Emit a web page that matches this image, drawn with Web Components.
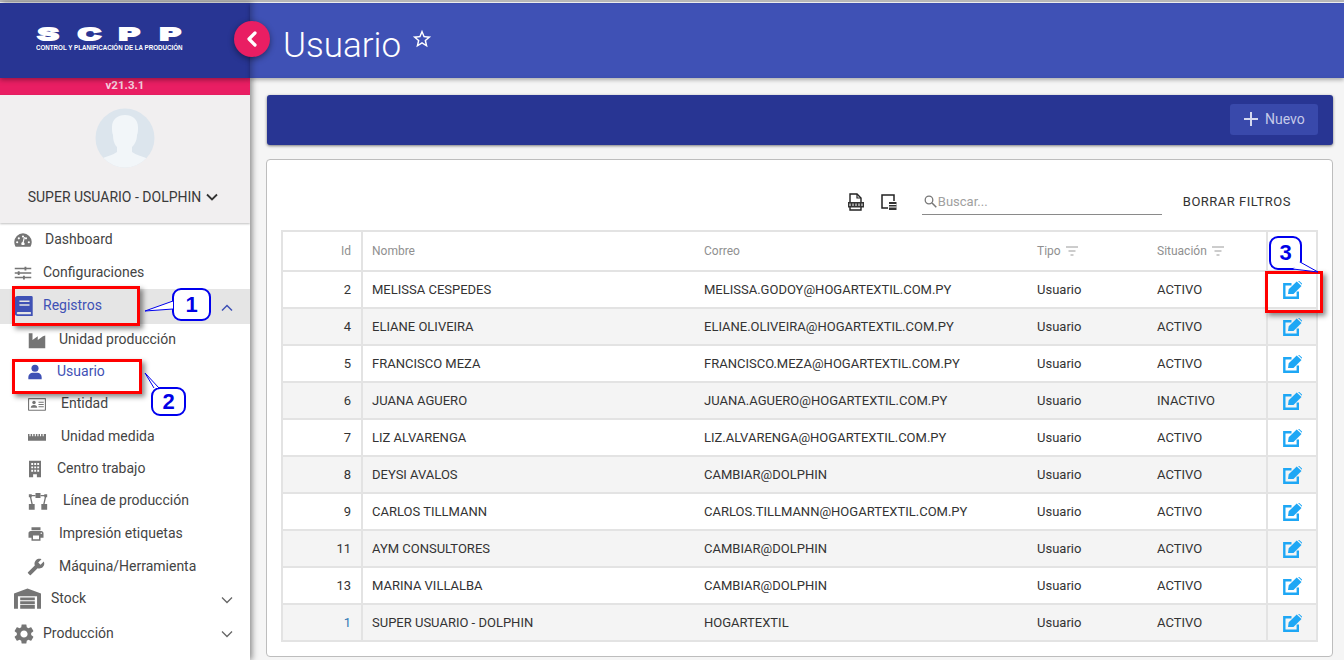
<!DOCTYPE html>
<html lang="es"><head><meta charset="utf-8"><title>Usuario</title>
<style>
html,body{margin:0;padding:0;height:660px;overflow:hidden;background:#f5f5f5;font-family:Roboto,"Liberation Sans",sans-serif}
</style></head><body>
<scpp-app>
  <scpp-sidebar slot="side"></scpp-sidebar>
  <scpp-header slot="head" title-text="Usuario"></scpp-header>
  <scpp-toolbar slot="main"></scpp-toolbar>
  <scpp-table-card slot="main"></scpp-table-card>
</scpp-app>
<scpp-mark box="12,286,128,40"></scpp-mark>
<scpp-mark box="12,359,130,35"></scpp-mark>
<scpp-mark box="1265,271,58,42"></scpp-mark>
<scpp-callout box="172,288,39,33" tail="M1 13L-27 23L1 21" n="1"></scpp-callout>
<scpp-callout box="151,387,35,29" tail="M8 1L-6 -14L3 1" n="2"></scpp-callout>
<scpp-callout box="1269,236,33,34" tail="M24 33L49 36L31 26" n="3"></scpp-callout>
<script>
const ICONS={
 dash:'<path d="M12 4A10.500 10.500 0 0 0 1.500 14.500c0 2 .5 3.700 1.400 5.200.2.300.5.300.8.300h16.600c.3 0 .6 0 .8-.3.9-1.500 1.400-3.200 1.400-5.200A10.500 10.500 0 0 0 12 4zm0 2.500a1.300 1.300 0 1 1 0 2.600 1.300 1.300 0 0 1 0-2.600zM5 16a1.300 1.300 0 1 1 0-2.600A1.300 1.300 0 0 1 5 16zm2-4.700a1.300 1.300 0 1 1 0-2.600 1.300 1.300 0 0 1 0 2.600zm6.600 6.700h-3.200c-.3-.5-.4-1-.4-1.500 0-1 .7-1.800 1.500-2l1.400-5.500c.1-.4.500-.6.900-.5.400.1.600.5.500.9l-1.400 5.200c.7.400 1.100 1.100 1.100 1.900 0 .5-.1 1-.4 1.500zm2-6.700a1.300 1.300 0 1 1 0-2.600 1.300 1.300 0 0 1 0 2.600zM19 16a1.300 1.300 0 1 1 0-2.600 1.300 1.300 0 0 1 0 2.600z"/>',
 tune:'<path d="M1 5h13V3.500h2.500V5H23v2h-6.500v1.500H14V7H1zM1 11h4V9.500h2.500V11H23v2H7.500v1.500H5V13H1zM1 17h11v-1.500h2.500V17H23v2h-8.500v1.500H12V19H1z"/>',
 book:'<path d="M5 1h15a1.500 1.500 0 0 1 1.500 1.500V23H5a3 3 0 0 1-3-3V4a3 3 0 0 1 3-3zm2 5v1.700h11V6zm0 4v1.700h11V10zM5 18.500a1.300 1.300 0 0 0 0 2.500h14.500v-2.500z"/>',
 factory:'<path d="M1 3h5v9l7-5v5l7-5 3-1v17H1z"/>',
 user:'<circle cx="12" cy="6.500" r="5.300"/><path d="M2 23v-3.500C2 15.500 5.500 13 8 13h8c2.500 0 6 2.500 6 6.500V23z"/>',
 card:'<path fill-rule="evenodd" d="M1 4h22a1 1 0 0 1 1 1v15a1 1 0 0 1-1 1H1a1 1 0 0 1-1-1V5a1 1 0 0 1 1-1zm.5 1.500v14h21v-14z"/><circle cx="8" cy="10" r="2.300"/><path d="M3.700 17c0-2.500 1.800-3.700 4.300-3.700s4.300 1.200 4.300 3.700zM14 9h7v1.400h-7zM14 12h7v1.400h-7zM14 15h7v1.400h-7z"/>',
 ruler:'<path d="M0 8h2v3h1.500V8h2v3H7V8h2v3h1.500V8h2v3H14V8h2v3h1.500V8h2v3H21V8h3v9H0z"/>',
 building:'<path fill-rule="evenodd" d="M4 1h16v22h-5.500v-4h-5v4H4zm3 3v2.500h2.500V4zm4 0v2.500h2.500V4zm4 0v2.500h2.500V4zM7 8.500V11h2.500V8.500zm4 0V11h2.500V8.500zm4 0V11h2.500V8.500zM7 13v2.500h2.500V13zm4 0v2.500h2.500V13zm4 0v2.500h2.500V13z"/>',
 tree:'<path d="M9 2.500h6v6H9zM1 4h3.500v3.500H1zM19.500 4H23v3.500h-3.500zM1 15.500h7v7H1zM16 15.500h7v7h-7z"/><path d="M3 7l2 9M21 7l-2 9M3 5.500h6M15 5.500h6" stroke="#757575" stroke-width="1.600" fill="none"/>',
 print:'<path d="M19 8H5c-1.660 0-3 1.340-3 3v6h4v4h12v-4h4v-6c0-1.660-1.340-3-3-3zm-3 11H8v-5h8v5zm3-7c-.55 0-1-.45-1-1s.45-1 1-1 1 .45 1 1-.45 1-1 1zm-1-9H6v4h12V3z"/>',
 wrench:'<path transform="matrix(-1 0 0 1 24 0)" d="M22.700 19l-9.100-9.100c.9-2.300.4-5-1.500-6.900-2-2-5-2.400-7.400-1.300L9 6 6 9 1.600 4.700C.4 7.100.9 10.100 2.900 12.100c1.900 1.900 4.600 2.400 6.900 1.500l9.100 9.100c.4.400 1 .4 1.400 0l2.300-2.300c.5-.4.500-1.100.1-1.400z"/>',
 store:'<path fill-rule="evenodd" d="M12 3L24 7.500V21h-3.500V10h-17v11H0V7.500zM5.500 11h13v2.600h-13zm0 3.400h13V17h-13zm0 3.400h13V21h-13z"/>',
 gear:'<path d="M19.140 12.940c.04-.3.06-.61.06-.94 0-.32-.02-.64-.07-.94l2.030-1.580c.18-.14.23-.41.12-.61l-1.920-3.320c-.12-.22-.37-.29-.59-.22l-2.390.96c-.5-.38-1.030-.7-1.620-.94l-.36-2.540c-.04-.24-.24-.41-.48-.41h-3.840c-.24 0-.43.17-.47.41l-.36 2.540c-.59.24-1.130.57-1.620.94l-2.390-.96c-.22-.08-.47 0-.59.22L2.740 8.870c-.12.21-.08.47.12.61l2.030 1.580c-.05.3-.09.63-.09.94s.02.64.07.94l-2.030 1.580c-.18.14-.23.41-.12.61l1.920 3.320c.12.22.37.29.59.22l2.390-.96c.5.38 1.030.7 1.620.94l.36 2.540c.05.24.24.41.48.41h3.840c.24 0 .44-.17.47-.41l.36-2.540c.59-.24 1.130-.56 1.620-.94l2.390.96c.22.08.47 0 .59-.22l1.920-3.320c.12-.22.07-.47-.12-.61l-2.010-1.580zM12 15.600c-1.980 0-3.600-1.620-3.600-3.600s1.620-3.600 3.600-3.600 3.600 1.620 3.600 3.600-1.620 3.600-3.600 3.600z"/>'
};
const svg=(name,size,color)=>`<svg width="${size}" height="${size}" viewBox="0 0 24 24" fill="${color}" aria-hidden="true">${ICONS[name]}</svg>`;
const def=(tag,html,extra)=>{customElements.define(tag,class extends HTMLElement{
  connectedCallback(){ if(this.shadowRoot) return; const r=this.attachShadow({mode:'open'}); r.innerHTML=typeof html==='function'?html(this):html; if(extra) extra(this,r);}
});};

def('scpp-app',`<style>
:host{display:grid;grid-template-columns:250px minmax(0,1fr);grid-template-rows:75px 1fr;width:1344px;height:660px;box-sizing:border-box;padding-top:3px;overflow:hidden;position:relative;background:#f5f5f5}
:host::before{content:"";position:absolute;left:0;right:0;top:0;height:2px;background:#b9b9b9}
.side{grid-row:1/3;grid-column:1;position:relative;z-index:2;min-height:0}
.head{grid-row:1;grid-column:2;position:relative;z-index:3}
.main{grid-row:2;grid-column:2;padding:17px 11px 0 16px;display:flex;flex-direction:column;gap:14px;min-height:0;min-width:0}
</style><div class="side"><slot name="side"></slot></div><div class="head"><slot name="head"></slot></div><div class="main"><slot name="main"></slot></div>`);

def('scpp-sidebar',`<style>
:host{display:flex;flex-direction:column;height:657px;background:#fff;box-shadow:2px 0 6px rgba(0,0,0,.45);overflow:hidden;font-family:Roboto,"Liberation Sans",sans-serif}
.brand{height:75px;background:#283593;box-shadow:0 2px 5px rgba(0,0,0,.35);position:relative;z-index:2;flex:none;display:flex;flex-direction:column;padding:24px 0 0 36px;box-sizing:border-box;color:#fff}
.letters{display:flex;gap:16px;height:15px;align-items:center}
.letters span{display:block;width:24.500px;font:700 16.500px/15px "Liberation Sans",sans-serif;-webkit-text-stroke:2.200px #fff;transform:scaleX(1.85);text-align:center}
.sub{font:700 8px/8px "Liberation Sans",sans-serif;white-space:nowrap;transform:scaleX(.777);transform-origin:0 0;margin-top:2px}
.ver{height:17px;background:#e91e63;color:#f6cfdd;font-size:11.500px;font-weight:700;line-height:15px;text-align:center;flex:none}
.profile{height:128px;background:#f1eff0;flex:none;display:flex;flex-direction:column;align-items:center;box-shadow:0 1px 2px rgba(0,0,0,.25);position:relative;z-index:1}
.profile svg.av{margin-top:13px}
.who{margin-top:20px;padding-right:4px;font-size:14px;line-height:18px;color:#3a3a3a;display:flex;align-items:center;gap:5px;white-space:nowrap}
nav{display:flex;flex-direction:column;flex:none}
</style>
<div class="brand"><div class="letters"><span>S</span><span>C</span><span>P</span><span>P</span></div><div class="sub">CONTROL Y PLANIFICACIÓN DE LA PRODUCIÓN</div></div>
<div class="ver">v21.3.1</div>
<div class="profile">
<svg class="av" width="60" height="60" viewBox="0 0 60 60"><defs><clipPath id="c"><circle cx="30" cy="30" r="29.500"/></clipPath></defs><circle cx="30" cy="30" r="29.500" fill="#dce5ed"/><path clip-path="url(#c)" fill="#f2f6f9" d="M17 19c0-8 6-12 13-12s13 4 13 12c0 3 0 6-1 8 0 6-3 10-5 12v5c4 3 10 4 14 6v10H8V50c4-2 10-3 14-6v-5c-2-2-4-6-4-12-1-2-1-5-1-8z"/></svg>
<div class="who">SUPER USUARIO - DOLPHIN <svg width="12" height="8" viewBox="0 0 12 8"><path d="M1 1.500l5 5 5-5" fill="none" stroke="#333" stroke-width="1.800"/></svg></div>
</div>
<nav>
<scpp-nav h="33" pb="2" pl="13" gap="12" icon="dash" isz="20" label="Dashboard"></scpp-nav>
<scpp-nav h="33" pb="2" pl="14" gap="11" icon="tune" isz="18" label="Configuraciones"></scpp-nav>
<scpp-nav h="35" pb="3" pl="13" gap="8" icon="book" isz="22" label="Registros" active open></scpp-nav>
<scpp-nav h="31" pb="2" pl="28" gap="13" icon="factory" isz="18" label="Unidad producción"></scpp-nav>
<scpp-nav h="32" pl="27" gap="14" icon="user" isz="16" label="Usuario" current></scpp-nav>
<scpp-nav h="33" pb="2" pl="28" gap="15" icon="card" isz="18" label="Entidad"></scpp-nav>
<scpp-nav h="32" pl="28" gap="15" icon="ruler" isz="18" label="Unidad medida"></scpp-nav>
<scpp-nav h="32" pl="26" gap="13" icon="building" isz="18" label="Centro trabajo"></scpp-nav>
<scpp-nav h="33" pb="2" pl="28" gap="15" icon="tree" isz="20" label="Línea de producción"></scpp-nav>
<scpp-nav h="32" pl="27" gap="14" icon="print" isz="18" label="Impresión etiquetas"></scpp-nav>
<scpp-nav h="33" pl="27" gap="14" icon="wrench" isz="18" label="Máquina/Herramienta"></scpp-nav>
<scpp-nav h="33" pb="2" pl="14" gap="10" icon="store" isz="27" label="Stock" closed></scpp-nav>
<scpp-nav h="36" pl="12" gap="7" icon="gear" isz="24" label="Producción" closed></scpp-nav>
<scpp-nav h="33" pl="13" gap="10" icon="book" isz="18" label=""></scpp-nav>
</nav>`);

def('scpp-nav',el=>{
 const active=el.hasAttribute('active'),cur=el.hasAttribute('current');
 const c=(active||cur)?'#3f51b5':'#757575', tc=(active||cur)?'#3f51b5':'#444';
 const chev=el.hasAttribute('open')?'<path d="M1 6.500l5-5 5 5" fill="none" stroke="#3f51b5" stroke-width="1.500"/>':'<path d="M1 1.500l5 5 5-5" fill="none" stroke="#666" stroke-width="1.300"/>';
 const hasChev=el.hasAttribute('open')||el.hasAttribute('closed');
 return `<style>
 :host{display:flex;align-items:center;height:${el.getAttribute('h')}px;box-sizing:border-box;padding-left:${el.getAttribute('pl')}px;padding-bottom:${el.getAttribute('pb')||0}px;background:${active?'#e5e5e5':'transparent'};font-size:14px;color:${tc};position:relative;white-space:nowrap}
 svg.i{flex:none;margin-right:${el.getAttribute('gap')}px;transform:translateY(1px)}
 svg.c{position:absolute;left:221px;top:50%;margin-top:-3px}
 </style>${svg(el.getAttribute('icon'),el.getAttribute('isz'),c).replace('<svg','<svg class="i"')}<span>${el.getAttribute('label')}</span>${hasChev?`<svg class="c" width="12" height="8" viewBox="0 0 12 8">${chev}</svg>`:''}`;
});

def('scpp-header',el=>`<style>
:host{display:flex;align-items:flex-start;height:75px;background:#3f51b5;box-shadow:0 2px 4px rgba(0,0,0,.3),inset 6px 0 6px -4px rgba(0,0,0,.3);color:#fff;position:relative;font-family:Roboto,"Liberation Sans",sans-serif}
.fab{position:absolute;left:-16px;top:18px;width:36px;height:36px;border-radius:50%;background:#e91e63;box-shadow:0 2px 6px rgba(0,0,0,.45);display:flex;align-items:center;justify-content:center}
h1{margin:22px 0 0 33px;font-weight:300;font-size:35px;line-height:42px}
.star{margin:25px 0 0 10px}
</style><div class="fab"><svg width="14" height="18" viewBox="0 0 14 18"><path d="M10 3L4 9l6 6" fill="none" stroke="#fff" stroke-width="3.200" stroke-linecap="round" stroke-linejoin="round"/></svg></div>
<h1>${el.getAttribute('title-text')}</h1>
<svg class="star" width="22" height="22" viewBox="0 0 24 24" fill="#fff"><path d="M22 9.240l-7.190-.62L12 2 9.190 8.630 2 9.240l5.460 4.730L5.820 21 12 17.270 18.180 21l-1.630-7.030L22 9.240zM12 15.400l-3.760 2.270 1-4.280-3.320-2.880 4.380-.38L12 6.100l1.710 4.040 4.380.38-3.320 2.880 1 4.280L12 15.400z"/></svg>`);

def('scpp-toolbar',`<style>
:host{display:flex;justify-content:flex-end;align-items:center;height:50px;box-sizing:border-box;background:#283593;border-radius:3px;padding:0 15px 2px 0;box-shadow:0 1px 3px rgba(0,0,0,.5);margin-left:1px;flex:none}
.btn{display:flex;align-items:center;gap:7px;width:88px;height:31px;box-sizing:border-box;padding-left:14px;border-radius:3px;background:#3949ab;color:#c5cae9;font-size:14px}
</style><div class="btn" role="button"><svg width="14" height="14" viewBox="0 0 14 14"><path d="M7 0v14M0 7h14" stroke="#d5d9ef" stroke-width="2"/></svg>Nuevo</div>`);

const rows=[[2,'MELISSA CESPEDES','MELISSA.GODOY@HOGARTEXTIL.COM.PY','Usuario','ACTIVO'],[4,'ELIANE OLIVEIRA','ELIANE.OLIVEIRA@HOGARTEXTIL.COM.PY','Usuario','ACTIVO'],[5,'FRANCISCO MEZA','FRANCISCO.MEZA@HOGARTEXTIL.COM.PY','Usuario','ACTIVO'],[6,'JUANA AGUERO','JUANA.AGUERO@HOGARTEXTIL.COM.PY','Usuario','INACTIVO'],[7,'LIZ ALVARENGA','LIZ.ALVARENGA@HOGARTEXTIL.COM.PY','Usuario','ACTIVO'],[8,'DEYSI AVALOS','CAMBIAR@DOLPHIN','Usuario','ACTIVO'],[9,'CARLOS TILLMANN','CARLOS.TILLMANN@HOGARTEXTIL.COM.PY','Usuario','ACTIVO'],[11,'AYM CONSULTORES','CAMBIAR@DOLPHIN','Usuario','ACTIVO'],[13,'MARINA VILLALBA','CAMBIAR@DOLPHIN','Usuario','ACTIVO'],[1,'SUPER USUARIO - DOLPHIN','HOGARTEXTIL','Usuario','ACTIVO']];
const editIcon='<svg width="19" height="18" viewBox="0 0 19 18"><path d="M8.500 3.200H1.300v13.500h13.500V10.500" fill="none" stroke="#1ea7f5" stroke-width="2.400"/><path d="M5 13l.7-4.700L13.700.5 18.500 5l-8 8zM15 0l1-.2 3 2.700-.2 1.300z" fill="#1ea7f5"/></svg>';
const filt='<svg width="12" height="10" viewBox="0 0 12 10"><path d="M0 1h12M2.500 5h7M4.500 9h3" stroke="#9a9a9a" stroke-width="1"/></svg>';

def('scpp-table-card',`<style>
:host{display:flex;flex-direction:column;height:498px;box-sizing:border-box;background:#fff;border:1px solid #bdbdbd;border-radius:4px;padding:0 14px 0 14px;font-family:Roboto,"Liberation Sans",sans-serif;flex:none}
.tools{height:70px;flex:none;display:flex;align-items:center;padding-top:14px;box-sizing:border-box;color:#333}
.tools .ic{display:flex;gap:16px;margin-left:auto}
.search{width:240px;height:26px;margin-left:25px;border-bottom:1px solid #8a8a8a;display:flex;align-items:center;gap:1px;padding:0 0 0 2px;box-sizing:border-box;color:#a0a0a0;font-size:13px}
.clear{margin:-2px 27px 0 21px;font-size:13px;letter-spacing:.5px;color:#333}
table{border-collapse:collapse;table-layout:fixed;width:1037px;font-size:13px;color:#333}
th{font-weight:400;color:#909090;font-size:12px;height:40px;box-sizing:border-box;text-align:left;padding:0 0 0 10px;background:#fff;white-space:nowrap}
td{height:37px;padding:0 0 0 10px;box-sizing:border-box;white-space:nowrap}
tr{border:2px solid #e3e3e3;border-width:1.500px 2px}
tbody tr:nth-child(even){background:#f4f4f4}
th,td{border-top:2px solid #e3e3e3;border-bottom:2px solid #e3e3e3}
.id{text-align:right;padding:0 10px 0 0;border-right:2px solid #e3e3e3}
th:nth-child(2),td:nth-child(2){padding-left:9px}
.act{border-left:2px solid #e3e3e3;padding:0;text-align:center}
.act svg{display:block;margin:0 auto}
th svg{margin-left:5px;vertical-align:-1px}
td.num1{color:#2f78b5}
</style>
<div class="tools"><div class="ic">
<svg width="18" height="18" viewBox="0 0 18 18"><path d="M3 1h7l4 4v12H3z" fill="#fff" stroke="#222" stroke-width="1.400"/><path d="M10 1v4h4" fill="none" stroke="#222" stroke-width="1.200"/><rect x="1" y="9" width="16" height="5.500" fill="#333"/><path d="M3 10.500v2.500M6 10.500v2.500M9 10.500v2.500M12 10.500v2.500M15 10.500v2.500" stroke="#fff" stroke-width="1"/></svg>
<svg width="16" height="18" viewBox="0 0 16 18"><path d="M13 8V2H1v13h6" fill="none" stroke="#222" stroke-width="1.500"/><rect x="8" y="9" width="7.500" height="8" fill="#333"/><path d="M8 11.500h7.500M8 14h7.500" stroke="#fff" stroke-width="1"/></svg></div>
<div class="search"><svg width="13" height="13" viewBox="0 0 13 13"><circle cx="5" cy="5" r="3.800" fill="none" stroke="#777" stroke-width="1.300"/><path d="M8 8l4.300 4.300" stroke="#777" stroke-width="1.500"/></svg><span>Buscar...</span></div>
<div class="clear">BORRAR FILTROS</div></div>
<table><colgroup><col style="width:80px"><col style="width:332px"><col style="width:333px"><col style="width:120px"><col style="width:120px"><col style="width:50px"></colgroup>
<thead><tr><th class="id">Id</th><th>Nombre</th><th>Correo</th><th>Tipo${filt}</th><th>Situación${filt}</th><th class="act"></th></tr></thead>
<tbody>${rows.map(r=>`<tr><td class="id ${r[0]===1?'num1':''}">${r[0]}</td><td>${r[1]}</td><td>${r[2]}</td><td>${r[3]}</td><td>${r[4]}</td><td class="act">${editIcon}</td></tr>`).join('')}</tbody></table>`);

def('scpp-mark',el=>{const [x,y,w,h]=el.getAttribute('box').split(',');return `<style>
:host{position:absolute;left:${x}px;top:${y}px;width:${w}px;height:${h}px;box-sizing:border-box;border:3px solid #f00;box-shadow:3px 3px 5px rgba(0,0,0,.45);z-index:10}
</style>`;});

def('scpp-callout',el=>{const [x,y,w,h]=el.getAttribute('box').split(',');return `<style>
:host{position:absolute;left:${x}px;top:${y}px;width:${w}px;height:${h}px;z-index:11;font:700 22px/1 "Liberation Sans",sans-serif;color:#0000e6}
.b{position:absolute;inset:0;box-sizing:border-box;border:2px solid #0000ee;border-radius:9px;background:#fff;display:flex;align-items:center;justify-content:center}
svg{position:absolute;left:0;top:0;overflow:visible}
</style><div class="b">${el.getAttribute('n')}</div><svg width="${w}" height="${h}"><path d="${el.getAttribute('tail')}" fill="#fff" stroke="#0000ee" stroke-width="1"/></svg>`;});
</script>
</body></html>
